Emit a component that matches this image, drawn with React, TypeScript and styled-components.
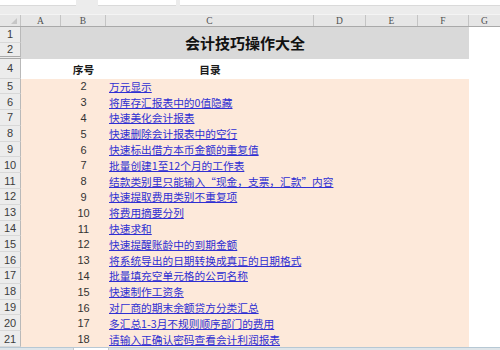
import styled, { createGlobalStyle } from 'styled-components'

const GlobalStyle = createGlobalStyle`
  html, body {
    margin: 0;
    padding: 0;
    background: #fff;
  }
  body {
    width: 500px;
    height: 350px;
    overflow: hidden;
    font-family: 'Liberation Sans', 'Noto Sans CJK SC', sans-serif;
  }
`

const COLS = '21px 40px 45px 208px 52px 52px 51px 1fr'
const CJK = "'Noto Sans CJK SC', 'Liberation Sans', sans-serif"

const Window = styled.div`
  display: flex;
  flex-direction: column;
  width: 500px;
  height: 350px;
  overflow: hidden;
`

const FormulaStrip = styled.div`
  display: flex;
  height: 14px;
  background: #ececec;
`

const FieldBox = styled.div<{ $w?: number; $ml?: number }>`
  height: 5px;
  width: ${(p) => (p.$w ? `${p.$w}px` : 'auto')};
  flex: ${(p) => (p.$w ? 'none' : '1')};
  margin-left: ${(p) => p.$ml || 0}px;
  background: #fff;
  border-bottom: 1px solid #dadada;
`

const HeaderRow = styled.div`
  display: grid;
  grid-template-columns: ${COLS};
  height: 11px;
  background: #e6e6e6;
  border-top: 1px solid #f4f4f4;
  border-bottom: 1px solid #a9a9a9;
`

const Corner = styled.div`
  position: relative;
  border-right: 1px solid #c4c4c4;
  &::after {
    content: '';
    position: absolute;
    right: 3px;
    bottom: 2px;
    border-left: 6px solid transparent;
    border-bottom: 6px solid #c6c6c6;
  }
`

const ColHead = styled.div<{ $last?: boolean }>`
  display: flex;
  align-items: center;
  justify-content: center;
  font-family: 'Liberation Serif', serif;
  font-size: 9.5px;
  color: #505050;
  border-right: ${(p) => (p.$last ? 'none' : '1px solid #c4c4c4')};
`

const TitleBlock = styled.div`
  display: grid;
  grid-template-columns: ${COLS};
  grid-template-rows: 15.5px 16px;
`

const RowHead = styled.div<{ $hidden?: boolean }>`
  display: flex;
  align-items: center;
  justify-content: center;
  background: #ececec;
  border-right: 1px solid #b9b9b9;
  border-bottom: ${(p) => (p.$hidden ? '3px double #a9a9a9' : '1px solid #d8d8d8')};
  box-sizing: border-box;
  font-size: 11px;
  color: #3c3c3c;
  grid-column: 1;
`

const TitleCell = styled.div`
  grid-column: 2 / 8;
  grid-row: 1 / 3;
  display: flex;
  align-items: center;
  justify-content: center;
  background: #d9d9d9;
  font-family: ${CJK};
  font-weight: 700;
  font-size: 15px;
  color: #111;
`

const Row = styled.div<{ $h: number }>`
  display: grid;
  grid-template-columns: ${COLS};
  height: ${(p) => p.$h}px;
`

const Cell = styled.div<{ $fill?: boolean; $span?: number; $center?: boolean; $bottom?: boolean }>`
  display: flex;
  align-items: ${(p) => (p.$bottom ? 'flex-end' : 'center')};
  justify-content: ${(p) => (p.$center ? 'center' : 'flex-start')};
  grid-column: span ${(p) => p.$span || 1};
  background: ${(p) => (p.$fill ? '#fde9da' : '#fff')};
  padding-bottom: ${(p) => (p.$bottom ? 2 : 0)}px;
  box-sizing: border-box;
  white-space: nowrap;
  overflow: hidden;
  min-width: 0;
`

const HeadText = styled.span`
  font-family: ${CJK};
  font-weight: 700;
  font-size: 10.7px;
  color: #1a1a1a;
`

const Num = styled.span`
  font-size: 11px;
  color: #333;
`

const TopicLink = styled.a`
  font-family: ${CJK};
  font-size: 10.7px;
  color: #2f2fd2;
  text-decoration: underline;
  text-underline-offset: 1px;
  margin-left: 3px;
  cursor: pointer;
`

const Footer = styled.div`
  flex: 1;
  display: flex;
  background: #dfe5e9;
  border-top: 1px solid #b7c8d4;
`

const SheetTab = styled.div`
  margin-left: 73px;
  width: 34px;
  background: #fff;
  border-left: 1px solid #c8c8c8;
  border-right: 1px solid #c8c8c8;
`

const topics: [number, string][] = [
  [2, '万元显示'],
  [3, '将库存汇报表中的0值隐藏'],
  [4, '快速美化会计报表'],
  [5, '快速删除会计报表中的空行'],
  [6, '快速标出借方本币金额的重复值'],
  [7, '批量创建1至12个月的工作表'],
  [8, '结款类别里只能输入“现金，支票，汇款”内容'],
  [9, '快速提取费用类别不重复项'],
  [10, '将费用摘要分列'],
  [11, '快速求和'],
  [12, '快速提醒账龄中的到期金额'],
  [13, '将系统导出的日期转换成真正的日期格式'],
  [14, '批量填充空单元格的公司名称'],
  [15, '快速制作工资条'],
  [16, '对厂商的期末余额贷方分类汇总'],
  [17, '多汇总1-3月不规则顺序部门的费用'],
  [18, '请输入正确认密码查看会计利润报表'],
]

export default function App() {
  return (
    <Window>
      <GlobalStyle />
      <FormulaStrip>
        <FieldBox $w={76} />
        <FieldBox $w={78} $ml={22} />
        <FieldBox $ml={4} />
      </FormulaStrip>

      <HeaderRow>
        <Corner />
        {['A', 'B', 'C', 'D', 'E', 'F'].map((c) => (
          <ColHead key={c}>{c}</ColHead>
        ))}
        <ColHead $last>G</ColHead>
      </HeaderRow>

      <TitleBlock>
        <RowHead>1</RowHead>
        <RowHead $hidden>2</RowHead>
        <TitleCell>会计技巧操作大全</TitleCell>
      </TitleBlock>

      <Row $h={20}>
        <RowHead>4</RowHead>
        <Cell />
        <Cell $center $bottom>
          <HeadText>序号</HeadText>
        </Cell>
        <Cell $center $bottom>
          <HeadText>目录</HeadText>
        </Cell>
        <Cell $span={4} />
      </Row>

      {topics.map(([n, title], i) => (
        <Row key={n} $h={15.8}>
          <RowHead>{i + 5}</RowHead>
          <Cell $fill />
          <Cell $fill $center>
            <Num>{n}</Num>
          </Cell>
          <Cell $fill $span={4}>
            <TopicLink>{title}</TopicLink>
          </Cell>
          <Cell />
        </Row>
      ))}

      <Footer>
        <SheetTab />
      </Footer>
    </Window>
  )
}
